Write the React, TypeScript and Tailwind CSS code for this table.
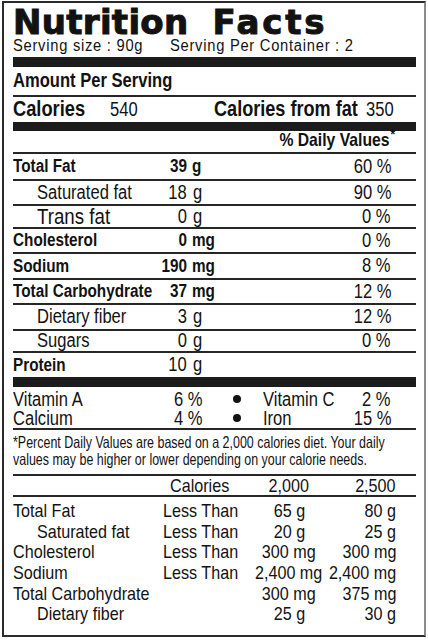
// condensed look: Liberation Sans squeezed horizontally
const L = 'inline-block whitespace-nowrap origin-left scale-x-[0.85]'
const R = 'inline-block whitespace-nowrap origin-right scale-x-[0.85]'
const C = 'inline-block whitespace-nowrap origin-center scale-x-[0.85]'

function Line() {
  return <div className="h-[2px] bg-[#262626]" />
}

type RowProps = {
  label: string
  num: string
  unit: string
  pct?: string
  bold?: boolean
  plainNum?: boolean
  labelClass?: string
  h: string
}

function NutrientRow({ label, num, unit, pct, bold, plainNum, labelClass, h }: RowProps) {
  const numWeight = bold && !plainNum ? 'font-bold text-[18px]' : 'font-normal text-[19.5px]'
  return (
    <div className={`flex items-center ${h}`}>
      <div className={`w-[130px] shrink-0 ${bold ? 'font-bold text-[18px]' : 'pl-[24px] text-[19.5px]'} ${labelClass ?? ''}`}>
        <span className={L}>{label}</span>
      </div>
      <div className={`flex w-[44px] shrink-0 justify-end ${numWeight}`}>
        <span className={R}>{num}</span>
      </div>
      <div className={`shrink-0 ${numWeight} ${bold && !plainNum ? 'ml-[5px]' : 'ml-[6px]'}`}>
        <span className={L}>{unit}</span>
      </div>
      <div className="ml-auto flex justify-end pr-[25px] text-[19.5px]">
        <span className={R}>{pct}</span>
      </div>
    </div>
  )
}

function RefRow({ label, less, a, b, indent }: { label: string; less?: boolean; a: string; b: string; indent?: boolean }) {
  return (
    <div className="flex h-[20.6px] items-center leading-[20px]">
      <div className={`w-[150px] shrink-0 ${indent ? 'pl-[24px]' : ''}`}>
        <span className={L}>{label}</span>
      </div>
      <div className="w-[83px] shrink-0">{less && <span className={L}>Less Than</span>}</div>
      <div className="flex w-[86px] shrink-0 justify-center">
        <span className={C}>{a}</span>
      </div>
      <div className="flex w-[64px] shrink-0 justify-end">
        <span className={R}>{b}</span>
      </div>
    </div>
  )
}

export default function App() {
  return (
    <div className="w-[428px] h-[640px] bg-white pt-[1px] pl-[2px] text-[#121212]">
      <div className="w-[424px] h-[636px] overflow-hidden border-2 border-[#2b2b2b] border-r-[#8a8a8a] pl-[9px] pr-[8px] font-['Liberation_Sans',Arial,sans-serif]">
        {/* title */}
        <div className="flex h-[34px] items-end gap-[24px] leading-[30px] font-['DejaVu_Sans',sans-serif] text-[34px] font-bold [-webkit-text-stroke:1px_#121212]">
          <span className="tracking-[0.3px]">Nutrition</span>
          <span className="tracking-[2.8px]">Facts</span>
        </div>
        <div className="flex h-[17px] leading-[17px] text-[16px] tracking-[0.8px]">
          <div className="w-[157px] shrink-0">
            <span className="inline-block whitespace-nowrap origin-left scale-x-[0.92]">Serving size : 90g</span>
          </div>
          <span className="inline-block whitespace-nowrap origin-left scale-x-[0.92]">Serving Per Container : 2</span>
        </div>
        <div className="mt-[3px] h-[10px] bg-[#1c1c1c]" />

        <div className="flex h-[28px] items-center text-[19.5px] font-bold">
          <span className={L}>Amount Per Serving</span>
        </div>
        <Line />
        <div className="flex h-[25px] items-center">
          <div className="w-[97px] shrink-0 text-[21.5px] font-bold">
            <span className={L}>Calories</span>
          </div>
          <div className="w-[104px] shrink-0 text-[19.5px]">
            <span className={L}>540</span>
          </div>
          <div className="w-[152px] shrink-0 text-[21.3px] font-bold">
            <span className={L}>Calories from fat</span>
          </div>
          <div className="text-[19.5px]">
            <span className={L}>350</span>
          </div>
        </div>
        <div className="h-[9px] bg-[#1c1c1c]" />

        <div className="flex h-[21px] items-end justify-end pr-[21px] text-[18.5px] font-bold leading-[21px]">
          <span className={R}>
            % Daily Values<span className="relative -top-[7px] ml-[1px] text-[14px]">*</span>
          </span>
        </div>
        <Line />
        <NutrientRow h="h-[25px]" bold label="Total Fat" num="39" unit="g" pct="60 %" />
        <Line />
        <NutrientRow h="h-[23px]" label="Saturated fat" num="18" unit="g" pct="90 %" />
        <Line />
        <NutrientRow h="h-[21px]" label="Trans fat" labelClass="text-[22px]" num="0" unit="g" pct="0 %" />
        <Line />
        <NutrientRow h="h-[23px]" bold label="Cholesterol" num="0" unit="mg" pct="0 %" />
        <Line />
        <NutrientRow h="h-[24px]" bold label="Sodium" num="190" unit="mg" pct="8 %" />
        <Line />
        <NutrientRow h="h-[23px]" bold label="Total Carbohydrate" num="37" unit="mg" pct="12 %" />
        <Line />
        <NutrientRow h="h-[24px]" label="Dietary fiber" num="3" unit="g" pct="12 %" />
        <Line />
        <NutrientRow h="h-[20px]" label="Sugars" num="0" unit="g" pct="0 %" />
        <Line />
        <NutrientRow h="h-[24px]" bold plainNum label="Protein" num="10" unit="g" />
        <div className="h-[10px] bg-[#1c1c1c]" />

        {/* vitamins */}
        <div className="pt-[2px] text-[19.5px] leading-[18px]">
          {[
            ['Vitamin A', '6 %', 'Vitamin C', '2 %'],
            ['Calcium', '4 %', 'Iron', '15 %'],
          ].map(([a, ap, b, bp]) => (
            <div key={a} className="flex h-[19px] items-center">
              <div className="flex w-[190px] shrink-0 justify-between">
                <span className={L}>{a}</span>
                <span className={R}>{ap}</span>
              </div>
              <div className="flex w-[60px] shrink-0 justify-center pl-[8px]">
                <span className="h-[8px] w-[8px] rounded-full bg-[#121212]" />
              </div>
              <div className="flex w-[128px] shrink-0 justify-between">
                <span className={L}>{b}</span>
                <span className={R}>{bp}</span>
              </div>
            </div>
          ))}
        </div>
        <div className="mt-[1px]">
          <Line />
        </div>

        <div className="h-[44px] pt-[4px] text-[16.5px] leading-[17px]">
          <div>
            <span className="inline-block whitespace-nowrap origin-left scale-x-[0.755]">
              *Percent Daily Values are based on a 2,000 calories diet. Your daily
            </span>
          </div>
          <div>
            <span className="inline-block whitespace-nowrap origin-left scale-x-[0.755]">
              values may be higher or lower depending on your calorie needs.
            </span>
          </div>
        </div>
        <Line />

        {/* reference table */}
        <div className="text-[19px]">
          <div className="flex h-[19px] items-center leading-[19px]">
            <div className="w-[150px] shrink-0" />
            <div className="w-[83px] shrink-0 pl-[7px]">
              <span className={L}>Calories</span>
            </div>
            <div className="flex w-[86px] shrink-0 justify-center">
              <span className={C}>2,000</span>
            </div>
            <div className="flex w-[64px] shrink-0 justify-end">
              <span className={R}>2,500</span>
            </div>
          </div>
          <Line />
          <div className="pt-[4px]">
            <RefRow label="Total Fat" less a="65 g" b="80 g" />
            <RefRow label="Saturated fat" less indent a="20 g" b="25 g" />
            <RefRow label="Cholesterol" less a="300 mg" b="300 mg" />
            <RefRow label="Sodium" less a="2,400 mg" b="2,400 mg" />
            <RefRow label="Total Carbohydrate" a="300 mg" b="375 mg" />
            <RefRow label="Dietary fiber" indent a="25 g" b="30 g" />
          </div>
        </div>
      </div>
    </div>
  )
}
